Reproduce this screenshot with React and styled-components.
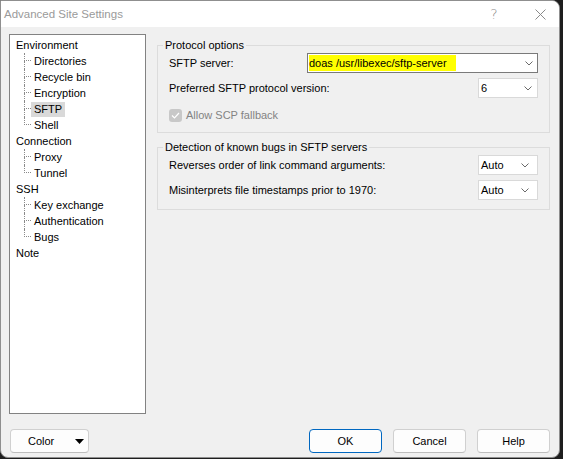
import React from 'react';
import styled, { createGlobalStyle } from 'styled-components';

const Global = createGlobalStyle`
  html, body { margin: 0; padding: 0; background: #1e1e1e; overflow: hidden; }
  body { font-family: "Liberation Sans", Arial, sans-serif; font-size: 11px; color: #000; }
  #root { width: 563px; height: 459px; }
`;

const Window = styled.div`
  box-sizing: border-box;
  width: 560px;
  height: 458px;
  background: #f0f0f0;
  border: 1px solid #8f8f8f;
  border-radius: 0 8px 8px 8px;
  overflow: hidden;
  display: flex;
  flex-direction: column;
`;

const TitleBar = styled.div`
  height: 26px;
  flex: none;
  background: #fff;
  display: flex;
  align-items: center;
  padding-left: 3px;
`;

const Title = styled.div`
  flex: 1;
  color: #9a9a9a;
  font-size: 11.5px;
`;

const CaptionButton = styled.div`
  width: ${(p) => p.$w}px;
  height: 100%;
  box-sizing: border-box;
  padding-left: ${(p) => p.$pl || 0}px;
  display: flex;
  align-items: center;
  justify-content: center;
  color: #8a8a8a;
  font-size: 14px;
  font-family: "DejaVu Sans", sans-serif;
  font-weight: 300;
`;

const Body = styled.div`
  flex: 1;
  min-height: 0;
  display: flex;
  flex-direction: column;
  padding: 7px 9px 4px 8px;
`;

const Main = styled.div`
  flex: 1;
  min-height: 0;
  display: flex;
  gap: 11px;
`;

const TreeBox = styled.div`
  box-sizing: border-box;
  width: 137px;
  flex: none;
  background: #fff;
  border: 1px solid #828282;
  padding-top: 2px;
`;

const ParentRow = styled.div`
  height: 16px;
  line-height: 16px;
  padding-left: 6px;
  white-space: nowrap;
`;

const ChildRow = styled.div`
  height: 16px;
  display: flex;
  align-items: center;
  padding-left: 14px;
  white-space: nowrap;
`;

const Connector = styled.div`
  width: 7px;
  height: 16px;
  flex: none;
  display: flex;
  flex-direction: column;
`;

const ConnTop = styled.div`
  box-sizing: border-box;
  height: 8px;
  border-left: 1px dotted #8a8a8a;
  border-bottom: 1px dotted #8a8a8a;
`;

const ConnBottom = styled.div`
  box-sizing: border-box;
  height: 8px;
  border-left: 1px dotted ${(p) => (p.$last ? 'transparent' : '#8a8a8a')};
`;

const NodeLabel = styled.span`
  padding: 0 3px;
  line-height: 15px;
  background: ${(p) => (p.$selected ? '#d9d9d9' : 'transparent')};
`;

const Panel = styled.div`
  flex: 1;
  display: flex;
  flex-direction: column;
  gap: 7px;
  padding-top: 4px;
`;

const Group = styled.fieldset`
  margin: 0;
  padding: 0 11px 9px 11px;
  border: 1px solid #dcdcdc;
  display: flex;
  flex-direction: column;
  gap: 5px;
`;

const Legend = styled.legend`
  padding: 0 2px;
  margin-left: -6px;
  line-height: 15px;
`;

const Row = styled.div`
  height: 20px;
  display: flex;
  align-items: center;
  justify-content: space-between;
`;

const Combo = styled.div`
  box-sizing: border-box;
  width: ${(p) => p.$w}px;
  height: 20px;
  background: #fff;
  border: 1px solid ${(p) => (p.$edit ? '#7a7a7a' : '#d9d9d9')};
  display: flex;
  align-items: center;
  padding-left: ${(p) => (p.$edit ? 1 : 2)}px;
`;

const ComboText = styled.span`
  flex: 1;
  white-space: nowrap;
`;

const Highlight = styled.span`
  background: #ffff00;
  line-height: 16px;
  padding-right: 9px;
  display: inline-block;
`;

const ChevronSvg = styled.svg`
  flex: none;
  margin-right: ${(p) => p.$mr}px;
`;

const CheckRow = styled.label`
  display: flex;
  align-items: center;
  gap: 4px;
  height: 16px;
  margin-top: 4px;
  color: #838383;
`;

const CheckBox = styled.span`
  width: 13px;
  height: 13px;
  box-sizing: border-box;
  border-radius: 3px;
  background: #c8c8c8;
  display: flex;
  align-items: center;
  justify-content: center;
`;

const Footer = styled.div`
  flex: none;
  height: 24px;
  margin-top: 15px;
  display: flex;
  align-items: center;
  gap: 11px;
`;

const Button = styled.div`
  box-sizing: border-box;
  width: ${(p) => p.$w || 73}px;
  height: 24px;
  background: #fdfdfd;
  border: 1px solid ${(p) => (p.$default ? '#0067c0' : '#d0d0d0')};
  border-bottom-color: ${(p) => (p.$default ? '#0067c0' : '#bdbdbd')};
  border-radius: 4px;
  display: flex;
  align-items: center;
  justify-content: ${(p) => (p.$split ? 'space-between' : 'center')};
  padding: ${(p) => (p.$split ? '0 4px 0 17px' : '0')};
  margin-left: ${(p) => p.$ml || 0}px;
`;

const Spacer = styled.div`
  flex: 1;
`;

function Chevron({ mr = 5 }) {
  return (
    <ChevronSvg $mr={mr} width="8" height="5" viewBox="0 0 8 5">
      <polyline points="0.5,0.5 4,4 7.5,0.5" fill="none" stroke="#6a6a6a" strokeWidth="1" />
    </ChevronSvg>
  );
}

function Child({ label, last, selected }) {
  return (
    <ChildRow>
      <Connector>
        <ConnTop />
        <ConnBottom $last={last} />
      </Connector>
      <NodeLabel $selected={selected}>{label}</NodeLabel>
    </ChildRow>
  );
}

const tree = [
  { label: 'Environment', children: ['Directories', 'Recycle bin', 'Encryption', 'SFTP', 'Shell'] },
  { label: 'Connection', children: ['Proxy', 'Tunnel'] },
  { label: 'SSH', children: ['Key exchange', 'Authentication', 'Bugs'] },
  { label: 'Note', children: [] },
];

export default function App() {
  return (
    <>
      <Global />
      <Window>
        <TitleBar>
          <Title>Advanced Site Settings</Title>
          <CaptionButton $w={46}>?</CaptionButton>
          <CaptionButton $w={42} $pl={4}>
            <svg width="11" height="11" viewBox="0 0 11 11">
              <path d="M0.5 0.5 L10.5 10.5 M10.5 0.5 L0.5 10.5" stroke="#8a8a8a" strokeWidth="1" fill="none" />
            </svg>
          </CaptionButton>
        </TitleBar>
        <Body>
          <Main>
            <TreeBox>
              {tree.map((n) => (
                <React.Fragment key={n.label}>
                  <ParentRow>{n.label}</ParentRow>
                  {n.children.map((c, i) => (
                    <Child key={c} label={c} last={i === n.children.length - 1} selected={c === 'SFTP'} />
                  ))}
                </React.Fragment>
              ))}
            </TreeBox>
            <Panel>
              <Group>
                <Legend>Protocol options</Legend>
                <Row>
                  <span>SFTP server:</span>
                  <Combo $w={231} $edit>
                    <ComboText>
                      <Highlight>doas /usr/libexec/sftp-server</Highlight>
                    </ComboText>
                    <Chevron mr={4} />
                  </Combo>
                </Row>
                <Row>
                  <span>Preferred SFTP protocol version:</span>
                  <Combo $w={60}>
                    <ComboText>6</ComboText>
                    <Chevron mr={5} />
                  </Combo>
                </Row>
                <CheckRow>
                  <CheckBox>
                    <svg width="9" height="7" viewBox="0 0 9 7">
                      <polyline points="1,3.5 3.5,6 8,1" fill="none" stroke="#fff" strokeWidth="1.2" />
                    </svg>
                  </CheckBox>
                  <span>Allow SCP fallback</span>
                </CheckRow>
              </Group>
              <Group>
                <Legend>Detection of known bugs in SFTP servers</Legend>
                <Row>
                  <span>Reverses order of link command arguments:</span>
                  <Combo $w={60}>
                    <ComboText>Auto</ComboText>
                    <Chevron mr={8} />
                  </Combo>
                </Row>
                <Row>
                  <span>Misinterprets file timestamps prior to 1970:</span>
                  <Combo $w={60}>
                    <ComboText>Auto</ComboText>
                    <Chevron mr={8} />
                  </Combo>
                </Row>
              </Group>
            </Panel>
          </Main>
          <Footer>
            <Button $w={79} $ml={1} $split>
              <span>Color</span>
              <svg width="9" height="5" viewBox="0 0 9 5">
                <polygon points="0,0 9,0 4.5,5" fill="#000" />
              </svg>
            </Button>
            <Spacer />
            <Button $default>OK</Button>
            <Button>Cancel</Button>
            <Button>Help</Button>
          </Footer>
        </Body>
      </Window>
    </>
  );
}
